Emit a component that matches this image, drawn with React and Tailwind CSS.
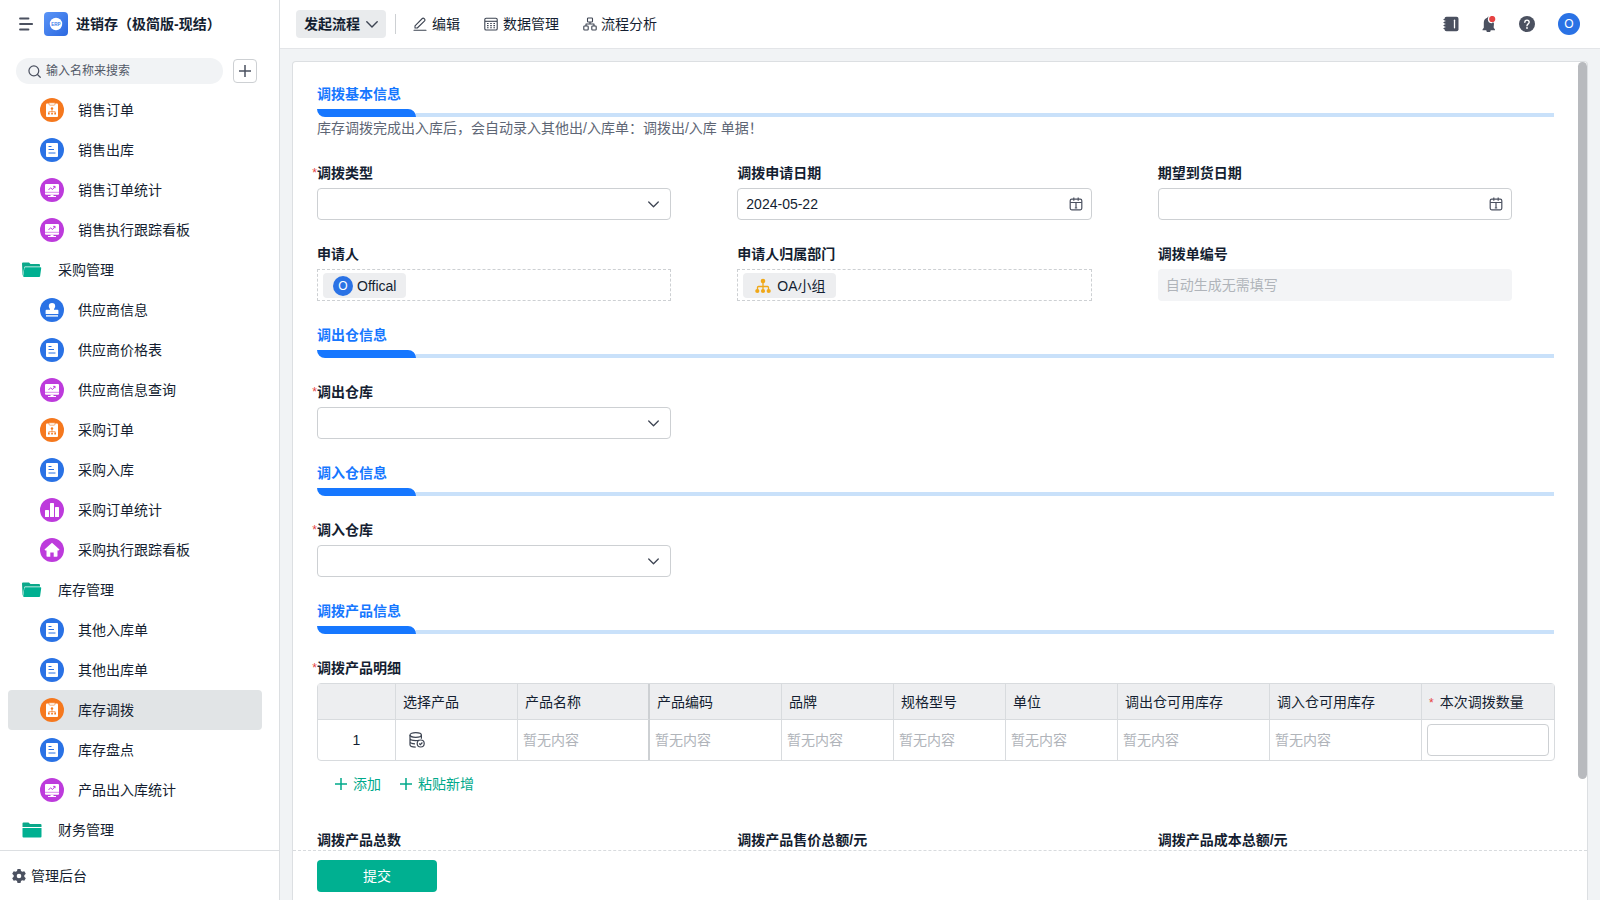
import React, { useState } from 'react';

const MENU = [
  { type: 'order', label: '销售订单' },
  { type: 'doc', label: '销售出库' },
  { type: 'board', label: '销售订单统计' },
  { type: 'board', label: '销售执行跟踪看板' },
  { type: 'folderOpen', label: '采购管理' },
  { type: 'stamp', label: '供应商信息' },
  { type: 'doc', label: '供应商价格表' },
  { type: 'board', label: '供应商信息查询' },
  { type: 'order', label: '采购订单' },
  { type: 'doc', label: '采购入库' },
  { type: 'bars', label: '采购订单统计' },
  { type: 'home', label: '采购执行跟踪看板' },
  { type: 'folderOpen', label: '库存管理' },
  { type: 'doc', label: '其他入库单' },
  { type: 'doc', label: '其他出库单' },
  { type: 'order', label: '库存调拨' },
  { type: 'doc', label: '库存盘点' },
  { type: 'board', label: '产品出入库统计' },
  { type: 'folder', label: '财务管理' },
];

const COLUMNS = [
  { label: '产品名称', width: 'w-[132px]', border: 'border-r-2 border-r-[#cdd0d3]' },
  { label: '产品编码', width: 'w-[132px]', border: 'border-r' },
  { label: '品牌', width: 'w-[112px]', border: 'border-r' },
  { label: '规格型号', width: 'w-[112px]', border: 'border-r' },
  { label: '单位', width: 'w-[112px]', border: 'border-r' },
  { label: '调出仓可用库存', width: 'w-[152px]', border: 'border-r' },
  { label: '调入仓可用库存', width: 'w-[152px]', border: 'border-r' },
];

const GLYPHS = {
  order: {
    bg: 'bg-[#f5781e]',
    art: (
      <>
        <path d="M7 5.500h10a1 1 0 011 1V18a1 1 0 01-1 1H7a1 1 0 01-1-1V6.500a1 1 0 011-1z" fill="#fff" />
        <path d="M9 4.800h6v1.400a1 1 0 01-1 1h-4a1 1 0 01-1-1z" fill="#fff" stroke="#f5781e" strokeWidth=".6" />
        <path d="M12 11v3M8.800 15v-1.300h6.400V15" fill="none" stroke="#f5781e" strokeWidth=".7" />
        <circle cx="12" cy="10.500" r="1.200" fill="#f5781e" />
        <path d="M8 14.800h1.700v1.700H8zM11.200 14.800h1.700v1.700h-1.700zM14.300 14.800H16v1.700h-1.700z" fill="#f5781e" />
      </>
    ),
  },
  doc: {
    bg: 'bg-[#2a72e5]',
    art: (
      <>
        <rect x="6" y="5" width="12" height="14" rx="1" fill="#fff" />
        <path d="M8.500 8.500h3M8.500 11.500H14M8.500 15h7" stroke="#2a72e5" strokeWidth="1" />
      </>
    ),
  },
  board: {
    bg: 'bg-[#bd3bdc]',
    art: (
      <>
        <path d="M6 6h12a1 1 0 011 1v8.700a1 1 0 01-1 1H6a1 1 0 01-1-1V7a1 1 0 011-1z" fill="#fff" />
        <path d="M10.500 16.700h3v1.300H16v1H8v-1h2.500z" fill="#fff" />
        <path d="M5 14.300h14" stroke="#bd3bdc" strokeWidth=".6" />
        <path d="M8.500 12l2-2.200 2 1.700L15 8.500M13.200 8.400H15v1.800" fill="none" stroke="#bd3bdc" strokeWidth="1" />
      </>
    ),
  },
  stamp: {
    bg: 'bg-[#2a72e5]',
    art: (
      <>
        <path d="M12 5a3.200 3.200 0 013.200 3.200c0 1.200-.7 1.900-1.200 2.800v.8h3.500a.9.900 0 01.9.900v3.200H5.600v-3.200a.9.900 0 01.9-.9H10V11c-.500-.9-1.200-1.600-1.200-2.800A3.200 3.200 0 0112 5z" fill="#fff" />
        <path d="M6 17.200h12v1.400H6z" fill="#fff" />
      </>
    ),
  },
  bars: {
    bg: 'bg-[#bd3bdc]',
    art: (
      <>
        <rect x="5" y="12" width="4" height="7" rx=".6" fill="#fff" />
        <rect x="10" y="5" width="4" height="14" rx=".6" fill="#fff" />
        <rect x="15" y="9" width="4" height="10" rx=".6" fill="#fff" />
      </>
    ),
  },
  home: {
    bg: 'bg-[#bd3bdc]',
    art: (
      <path d="M12 4.800l7.500 6.700-.8.900H17.500v5.600a.8.800 0 01-.8.800h-3V14.500h-3.400v4.300h-3a.8.800 0 01-.8-.8v-5.600H5.300l-.8-.9z" fill="#fff" />
    ),
  },
};

function FolderIcon({ open }) {
  return (
    <svg className="h-4 w-5 shrink-0" viewBox="0 0 20 16">
      {open ? (
        <>
          <path d="M0 1.500A1 1 0 011 .5h6l1.500 1.500h8.500a1 1 0 011 1V4.500H3.200a1 1 0 00-1 .9L.8 13.500H.6z" fill="#0aa88a" />
          <path d="M3.200 5.300h15.200a.8.800 0 01.8 1l-1.100 7.900a1 1 0 01-1 .8H2.200a1 1 0 01-1-1.200l1.200-7.800a.9.900 0 01.8-.7z" fill="#00b091" />
        </>
      ) : (
        <>
          <path d="M.5 1.500a1 1 0 011-1h5l1.500 1.500h10.500a1 1 0 011 1v2H.5z" fill="#0aa88a" />
          <path d="M.5 6h19v8.500a1 1 0 01-1 1h-17a1 1 0 01-1-1z" fill="#00b091" />
        </>
      )}
    </svg>
  );
}

function MenuItem({ item, active, onSelect }) {
  const isFolder = item.type === 'folder' || item.type === 'folderOpen';
  if (isFolder) {
    return (
      <button className="flex h-10 w-full items-center gap-4 rounded pl-[14px] text-left">
        <FolderIcon open={item.type === 'folderOpen'} />
        <span>{item.label}</span>
      </button>
    );
  }
  const glyph = GLYPHS[item.type];
  return (
    <button
      onClick={onSelect}
      className={`flex h-10 w-full items-center gap-[14px] rounded pl-8 text-left ${active ? 'bg-[#e1e4e6]' : 'hover:bg-[#f1f3f5]'}`}
    >
      <span className={`h-6 w-6 shrink-0 rounded-full ${glyph.bg}`}>
        <svg className="h-6 w-6" viewBox="0 0 24 24">{glyph.art}</svg>
      </span>
      <span>{item.label}</span>
    </button>
  );
}

function Sidebar() {
  const [active, setActive] = useState('库存调拨');

  return (
    <aside className="flex h-full w-[280px] shrink-0 flex-col border-r border-[#dcdfe2] bg-white">
      <div className="flex h-12 shrink-0 items-center pl-[19px]">
        <button aria-label="收起菜单">
          <svg className="h-[14px] w-[14px]" viewBox="0 0 14 14" fill="none" stroke="#4b5160" strokeWidth="1.800" strokeLinecap="round">
            <path d="M1 1.500h8.500M1 7h12.200M1 12.500h8.500" />
          </svg>
        </button>
        <span className="ml-[11px] h-6 w-6 rounded bg-linear-to-br from-[#5b95f7] to-[#2b68e0]">
          <svg className="h-6 w-6" viewBox="0 0 24 24">
            <circle cx="12" cy="12" r="6.200" fill="#fff" />
            <text x="12" y="13.700" textAnchor="middle" fontSize="4.500" fontWeight="700" fontFamily="Liberation Sans, sans-serif" fill="#3b7bea">ERP</text>
          </svg>
        </span>
        <span className="ml-2 font-bold">进销存（极简版-现结）</span>
      </div>

      <div className="flex h-[42px] shrink-0 items-center gap-[10px] pt-1 pr-[22px] pl-4">
        <label className="flex h-[26px] min-w-0 flex-1 items-center gap-[5px] rounded-full bg-[#f1f3f5] pl-3">
          <svg className="h-[13px] w-[13px] shrink-0" viewBox="0 0 14 14" fill="none" stroke="#4b5160" strokeWidth="1.300" strokeLinecap="round">
            <circle cx="6.300" cy="6.300" r="5.300" />
            <path d="M10.200 10.200l3 3" />
          </svg>
          <input
            aria-label="输入名称来搜索"
            placeholder="输入名称来搜索"
            className="min-w-0 flex-1 bg-transparent text-xs outline-none placeholder:text-[#525967]"
          />
        </label>
        <button aria-label="新建" className="flex h-6 w-6 items-center justify-center rounded border border-[#cdd0d3]">
          <svg className="h-3 w-3" viewBox="0 0 12 12" stroke="#4b5160" strokeWidth="1.500">
            <path d="M6 0v12M0 6h12" />
          </svg>
        </button>
      </div>

      <nav className="min-h-0 flex-1 overflow-y-auto pr-[17px] pl-2 [scrollbar-width:none]">
        {MENU.map((item) => (
          <MenuItem key={item.label} item={item} active={active === item.label} onSelect={() => setActive(item.label)} />
        ))}
      </nav>

      <button className="flex h-[50px] shrink-0 items-center gap-[5px] border-t border-[#dcdfe2] pl-3 text-left">
        <svg className="h-[14px] w-[14px]" viewBox="0 0 14 14">
          <path
            fillRule="evenodd"
            d="M5.500 0h3l.5 2 1.300.8 2-.6 1.500 2.600L12.300 6.200v1.600l1.500 1.400-1.500 2.600-2-.6L9 12l-.5 2h-3L5 12l-1.300-.8-2 .6L.2 9.200l1.500-1.400V6.200L.2 4.800l1.500-2.600 2 .6L5 2zM7 4.700a2.300 2.300 0 100 4.600 2.300 2.300 0 000-4.600z"
            fill="#4b5160"
          />
        </svg>
        <span>管理后台</span>
      </button>
    </aside>
  );
}

function ChevronDown({ className }) {
  return (
    <svg className={className} viewBox="0 0 12 7" fill="none" stroke="#3d4452" strokeWidth="1.400" strokeLinecap="round" strokeLinejoin="round">
      <path d="M.8.800L6 6 11.200.8" />
    </svg>
  );
}

function TopBar() {
  return (
    <header className="flex h-[49px] shrink-0 items-center border-b border-[#e3e5e8] bg-white pr-5 pl-4">
      <button className="flex h-7 items-center gap-[6px] rounded bg-[#e9ebed] px-2 font-bold">
        发起流程
        <ChevronDown className="h-[7px] w-3" />
      </button>
      <span className="ml-[9px] h-5 w-px bg-[#cdd0d3]" />
      <nav className="ml-[17px] flex items-center gap-6">
        <button className="flex items-center gap-[5px]">
          <svg className="h-[14px] w-[14px]" viewBox="0 0 14 14" fill="none" stroke="#3d4452" strokeWidth="1.100" strokeLinejoin="round" strokeLinecap="round">
            <path d="M2 8.800L9.300 1.500a1.200 1.200 0 011.700 0l.6.600a1.200 1.200 0 010 1.700L4.300 11H2zM1 13.200h12" />
          </svg>
          编辑
        </button>
        <button className="flex items-center gap-[5px]">
          <svg className="h-[14px] w-[14px]" viewBox="0 0 14 14" fill="none" stroke="#3d4452" strokeWidth="1.100">
            <rect x=".8" y="1.200" width="12.400" height="11.800" rx="1.300" />
            <path d="M1 4.300h12" />
            <path d="M3 6.500h1.600M6.200 6.500h1.600M9.400 6.500H11M3 8.600h1.600M6.200 8.600h1.600M9.400 8.600H11M3 10.700h1.600M6.200 10.700h1.600M9.400 10.700H11" />
          </svg>
          数据管理
        </button>
        <button className="flex items-center gap-1">
          <svg className="h-[14px] w-[14px]" viewBox="0 0 14 14" fill="none" stroke="#3d4452" strokeWidth="1.100" strokeLinejoin="round">
            <rect x="4.500" y="1" width="5" height="4" rx=".8" />
            <rect x=".8" y="9" width="4.400" height="4" rx=".8" />
            <rect x="8.800" y="9" width="4.400" height="4" rx=".8" />
            <path d="M7 5v2M3 9V7h8v2" />
          </svg>
          流程分析
        </button>
      </nav>

      <div className="ml-auto flex items-center gap-[22px]">
        <button aria-label="通讯录">
          <svg className="h-4 w-4" viewBox="0 0 16 16">
            <rect x="1.500" y=".7" width="14" height="14.600" rx="2" fill="#4b5160" />
            <path d="M.5 3.500h3M.5 6.500h3M.5 9.500h3M.5 12.500h3" stroke="#4b5160" strokeWidth="1" />
            <path d="M1.500 5h1M1.500 8h1M1.500 11h1" stroke="#fff" strokeWidth=".7" />
            <path d="M11.500 4.200v7.600" stroke="#fff" strokeWidth="1.300" strokeLinecap="round" />
          </svg>
        </button>
        <button aria-label="消息">
          <svg className="h-4 w-4" viewBox="0 0 16 16">
            <path d="M7.500.8c.7 0 1.100.5 1.200 1 2.400.6 4 2.500 4 5v5l1.300 1.700v.7H9.700a2.200 2.200 0 01-4.400 0H1.500v-.7L2.800 11.800v-5c0-2.500 1.200-4.400 3.500-5 .1-.5.500-1 1.200-1z" fill="#4b5160" />
            <circle cx="10.900" cy="3.200" r="4" fill="#fff" />
            <path d="M12.700 6.500v3h-1.500V6.500z" fill="#4b5160" />
            <circle cx="11.200" cy="3" r="3.100" fill="#e64242" />
          </svg>
        </button>
        <button aria-label="帮助">
          <svg className="h-4 w-4" viewBox="0 0 16 16">
            <circle cx="8" cy="8" r="8" fill="#4b5160" />
            <path d="M5.800 6.300a2.200 2.200 0 114.400 0c0 1.500-2.200 1.600-2.200 3.400" fill="none" stroke="#fff" strokeWidth="1.400" strokeLinecap="round" />
            <circle cx="8" cy="12" r=".9" fill="#fff" />
          </svg>
        </button>
        <button className="ml-px flex h-[22px] w-[22px] items-center justify-center rounded-full bg-[#2a72e5] text-xs text-white">O</button>
      </div>
    </header>
  );
}

function SectionTitle({ children, note }) {
  return (
    <section className="leading-[22px]">
      <h2 className="font-bold text-[#1677ff]">{children}</h2>
      <div className="mt-1 flex h-2 items-end">
        <span className="h-2 w-[99px] rounded-tr-lg rounded-bl-lg bg-[#1677ff]" />
        <span className="h-1 flex-1 bg-[#c9e1fa]" />
      </div>
      {note && <p className="text-[#5e6675]">{note}</p>}
    </section>
  );
}

function FieldLabel({ htmlFor, required, children }) {
  return (
    <label htmlFor={htmlFor} className="relative mb-1 block font-bold leading-[22px]">
      {required && <span className="absolute right-full text-xs font-normal leading-[22px] text-[#e64242]">*</span>}
      {children}
    </label>
  );
}

function SelectField({ id, label }) {
  return (
    <div>
      <FieldLabel htmlFor={id} required>{label}</FieldLabel>
      <div className="relative">
        <select id={id} className="block h-8 w-full appearance-none rounded border border-[#cdd0d3] bg-white px-2 outline-none focus:border-[#00b091]" />
        <ChevronDown className="pointer-events-none absolute top-[13px] right-3 h-[7px] w-[11px]" />
      </div>
    </div>
  );
}

function DateField({ id, label, defaultValue }) {
  return (
    <div>
      <FieldLabel htmlFor={id}>{label}</FieldLabel>
      <div className="flex h-8 items-center rounded border border-[#cdd0d3] bg-white px-2">
        <input id={id} defaultValue={defaultValue} className="min-w-0 flex-1 outline-none" />
        <svg className="h-[14px] w-[14px] shrink-0" viewBox="0 0 14 14" fill="none" stroke="#4b5160" strokeWidth="1.200">
          <rect x="1.200" y="2.200" width="11.600" height="10.600" rx="1.500" />
          <path d="M1.200 5.500h11.600M4.800.5v3.200M9.200.5v3.200M7 5.500v5.500M5.800 11h2.400" />
        </svg>
      </div>
    </div>
  );
}

function TagField({ label, children }) {
  return (
    <div>
      <FieldLabel>{label}</FieldLabel>
      <div className="flex h-8 items-start border border-dashed border-[#cdd0d3] px-[5px] pt-[3px]">{children}</div>
    </div>
  );
}

function DetailTable() {
  return (
    <table className="w-full table-fixed border-separate border-spacing-0 rounded-sm border border-[#d8dbde] text-left">
      <thead className="bg-[#edeef0]">
        <tr className="h-9">
          <th aria-label="序号" className="w-[78px] border-r border-b border-[#d8dbde]" />
          <th className="w-[122px] border-r border-b border-[#d8dbde] px-[7px] font-normal">选择产品</th>
          {COLUMNS.map((c) => (
            <th key={c.label} className={`border-b border-[#d8dbde] px-[7px] font-normal ${c.width} ${c.border}`}>{c.label}</th>
          ))}
          <th className="w-[132px] border-b border-[#d8dbde] px-[7px] font-normal">
            <span className="mr-[6px] text-xs text-[#e64242]">*</span>
            本次调拨数量
          </th>
        </tr>
      </thead>
      <tbody>
        <tr className="h-10">
          <td className="border-r border-[#d8dbde] text-center">1</td>
          <td className="border-r border-[#d8dbde] pl-[13px]">
            <button aria-label="选择产品" className="block">
              <svg className="h-4 w-4" viewBox="0 0 16 16" fill="none" stroke="#3d4452" strokeWidth="1.200">
                <ellipse cx="6.700" cy="3" rx="5.700" ry="2.300" />
                <path d="M1 3v9.800c0 1.300 2.500 2.300 5.700 2.300M12.400 3v3.800M1 6.300c0 1.300 2.500 2.300 5.700 2.300 1.200 0 2.400-.1 3.300-.4M1 9.600c0 1.300 2.300 2.200 5 2.300" />
                <circle cx="11.700" cy="11.500" r="3.500" />
                <path d="M10.200 11.500l1.200 1.200 2-2.200" />
              </svg>
            </button>
          </td>
          {COLUMNS.map((c) => (
            <td key={c.label} className={`border-[#d8dbde] px-[5px] text-[#b0b4ba] ${c.border}`}>暂无内容</td>
          ))}
          <td className="px-[5px]">
            <input aria-label="本次调拨数量" className="block h-8 w-full rounded border border-[#cdd0d3] px-2 outline-none" />
          </td>
        </tr>
      </tbody>
    </table>
  );
}

function AddButton({ children }) {
  return (
    <button className="flex items-center gap-[6px] text-[#00a98b]">
      <svg className="h-3 w-3" viewBox="0 0 12 12" stroke="currentColor" strokeWidth="1.500">
        <path d="M6 0v12M0 6h12" />
      </svg>
      {children}
    </button>
  );
}

function TransferForm() {
  return (
    <form className="flex min-h-0 flex-1 flex-col rounded-t border border-b-0 border-[#dcdfe2] bg-white" onSubmit={(e) => e.preventDefault()}>
      <div className="relative flex min-h-0 flex-1 flex-col">
        <div className="flex min-h-0 flex-1 flex-col gap-[23px] overflow-y-auto pt-[21px] pr-[33px] pl-6 [scrollbar-width:none]">
          <SectionTitle note="库存调拨完成出入库后，会自动录入其他出/入库单：调拨出/入库 单据！">调拨基本信息</SectionTitle>

          <div className="mr-[42px] grid grid-cols-3 gap-x-[66px] gap-y-[23px]">
            <SelectField id="type" label="调拨类型" />
            <DateField id="applyDate" label="调拨申请日期" defaultValue="2024-05-22" />
            <DateField id="arriveDate" label="期望到货日期" />
            <TagField label="申请人">
              <span className="flex h-[25px] items-center gap-1 rounded-sm bg-[#edeef0] px-[10px]">
                <span className="flex h-5 w-5 items-center justify-center rounded-full bg-[#2a72e5] text-xs text-white">O</span>
                Offical
              </span>
            </TagField>
            <TagField label="申请人归属部门">
              <span className="flex h-[25px] items-center gap-[6px] rounded-sm bg-[#edeef0] pr-[10px] pl-3">
                <svg className="h-4 w-4" viewBox="0 0 16 16" fill="#f0a818">
                  <circle cx="8" cy="3" r="2.300" />
                  <path d="M8 4v8M2.500 12V9.500a1 1 0 011-1h9a1 1 0 011 1V12" fill="none" stroke="#f0a818" strokeWidth="1.300" />
                  <circle cx="2.300" cy="13" r="2.100" />
                  <circle cx="8" cy="13" r="2.100" />
                  <circle cx="13.700" cy="13" r="2.100" />
                </svg>
                OA小组
              </span>
            </TagField>
            <div>
              <FieldLabel htmlFor="code">调拨单编号</FieldLabel>
              <input
                id="code"
                disabled
                placeholder="自动生成无需填写"
                className="block h-8 w-full rounded-sm bg-[#f3f4f6] px-2 placeholder:text-[#b0b4ba]"
              />
            </div>
          </div>

          <SectionTitle>调出仓信息</SectionTitle>
          <div className="mr-[42px] grid grid-cols-3 gap-x-[66px]">
            <SelectField id="outStore" label="调出仓库" />
          </div>

          <SectionTitle>调入仓信息</SectionTitle>
          <div className="mr-[42px] grid grid-cols-3 gap-x-[66px]">
            <SelectField id="inStore" label="调入仓库" />
          </div>

          <SectionTitle>调拨产品信息</SectionTitle>
          <div>
            <FieldLabel required>调拨产品明细</FieldLabel>
            <DetailTable />
            <div className="flex h-[45px] items-center gap-[19px] pl-[18px]">
              <AddButton>添加</AddButton>
              <AddButton>粘贴新增</AddButton>
            </div>
          </div>

          <div className="mr-[42px] grid grid-cols-3 gap-x-[66px]">
            {['调拨产品总数', '调拨产品售价总额/元', '调拨产品成本总额/元'].map((label, i) => (
              <div key={label}>
                <FieldLabel htmlFor={`total${i}`}>{label}</FieldLabel>
                <input id={`total${i}`} readOnly className="block h-8 w-full rounded-sm bg-[#f3f4f6] px-2" />
              </div>
            ))}
          </div>
        </div>
        <span className="absolute top-0 right-0 h-[91%] w-[9px] rounded-full bg-[#b8babe]" />
      </div>

      <div className="flex h-[50px] shrink-0 items-center border-t border-dashed border-[#d8dbde] pl-6">
        <button type="submit" className="h-8 w-[120px] rounded bg-[#00b091] text-white">提交</button>
      </div>
    </form>
  );
}

export default function App() {
  return (
    <div className="flex h-screen overflow-hidden bg-[#f1f3f5] font-['Liberation_Sans','Noto_Sans_CJK_SC',sans-serif] text-sm text-[#141e31]">
      <Sidebar />
      <div className="flex min-w-0 flex-1 flex-col">
        <TopBar />
        <main className="flex min-h-0 flex-1 flex-col px-3 pt-3">
          <TransferForm />
        </main>
      </div>
    </div>
  );
}
